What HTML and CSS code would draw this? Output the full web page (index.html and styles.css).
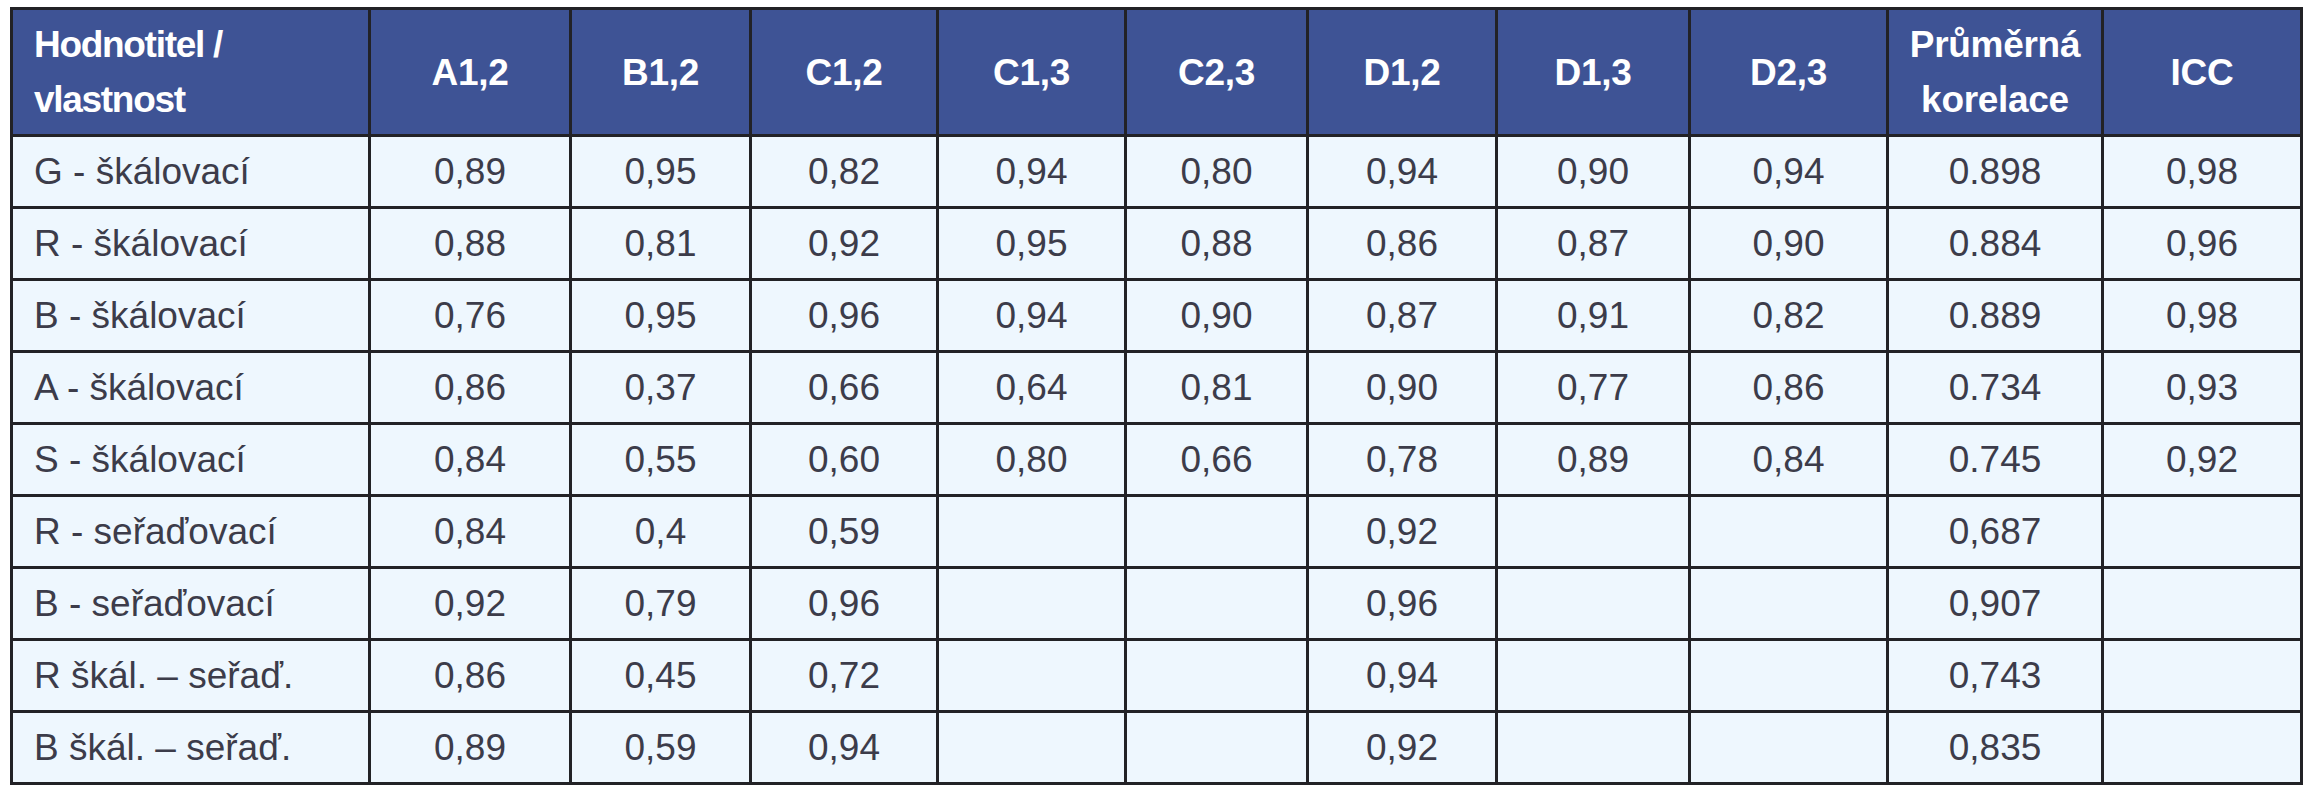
FILE: index.html
```html
<!DOCTYPE html>
<html lang="cs">
<head>
<meta charset="utf-8">
<title>Korelace hodnotitelů</title>
<link rel="stylesheet" href="styles.css">
</head>
<body>
<table class="grid">
  <colgroup>
    <col class="c-first">
    <col class="c-a12">
    <col class="c-b12">
    <col class="c-c12">
    <col class="c-c13">
    <col class="c-c23">
    <col class="c-d12">
    <col class="c-d13">
    <col class="c-d23">
    <col class="c-avg">
    <col class="c-icc">
  </colgroup>
  <thead>
    <tr>
      <th class="first">Hodnotitel /<br>vlastnost</th>
      <th>A1,2</th>
      <th>B1,2</th>
      <th>C1,2</th>
      <th>C1,3</th>
      <th>C2,3</th>
      <th>D1,2</th>
      <th>D1,3</th>
      <th>D2,3</th>
      <th>Průměrná<br>korelace</th>
      <th>ICC</th>
    </tr>
  </thead>
  <tbody>
    <tr><td class="first">G - škálovací</td><td>0,89</td><td>0,95</td><td>0,82</td><td>0,94</td><td>0,80</td><td>0,94</td><td>0,90</td><td>0,94</td><td>0.898</td><td>0,98</td></tr>
    <tr><td class="first">R - škálovací</td><td>0,88</td><td>0,81</td><td>0,92</td><td>0,95</td><td>0,88</td><td>0,86</td><td>0,87</td><td>0,90</td><td>0.884</td><td>0,96</td></tr>
    <tr><td class="first">B - škálovací</td><td>0,76</td><td>0,95</td><td>0,96</td><td>0,94</td><td>0,90</td><td>0,87</td><td>0,91</td><td>0,82</td><td>0.889</td><td>0,98</td></tr>
    <tr><td class="first">A - škálovací</td><td>0,86</td><td>0,37</td><td>0,66</td><td>0,64</td><td>0,81</td><td>0,90</td><td>0,77</td><td>0,86</td><td>0.734</td><td>0,93</td></tr>
    <tr><td class="first">S - škálovací</td><td>0,84</td><td>0,55</td><td>0,60</td><td>0,80</td><td>0,66</td><td>0,78</td><td>0,89</td><td>0,84</td><td>0.745</td><td>0,92</td></tr>
    <tr><td class="first">R - seřaďovací</td><td>0,84</td><td>0,4</td><td>0,59</td><td></td><td></td><td>0,92</td><td></td><td></td><td>0,687</td><td></td></tr>
    <tr><td class="first">B - seřaďovací</td><td>0,92</td><td>0,79</td><td>0,96</td><td></td><td></td><td>0,96</td><td></td><td></td><td>0,907</td><td></td></tr>
    <tr><td class="first">R škál. – seřaď.</td><td>0,86</td><td>0,45</td><td>0,72</td><td></td><td></td><td>0,94</td><td></td><td></td><td>0,743</td><td></td></tr>
    <tr><td class="first">B škál. – seřaď.</td><td>0,89</td><td>0,59</td><td>0,94</td><td></td><td></td><td>0,92</td><td></td><td></td><td>0,835</td><td></td></tr>
  </tbody>
</table>
</body>
</html>
```

FILE: styles.css
```css
html, body {
  margin: 0;
  padding: 0;
  background: #ffffff;
}

body {
  padding: 7px 0 0 10px;
  font-family: "Liberation Sans", Arial, sans-serif;
}

.grid {
  border-collapse: collapse;
  table-layout: fixed;
  width: 2291px;
  border: 3px solid #222226;
}

.c-first { width: 358px; }
.c-a12 { width: 201px; }
.c-b12 { width: 180px; }
.c-c12 { width: 187px; }
.c-c13 { width: 188px; }
.c-c23 { width: 182px; }
.c-d12 { width: 189px; }
.c-d13 { width: 193px; }
.c-d23 { width: 198px; }
.c-avg { width: 215px; }
.c-icc { width: 199px; }

.grid th,
.grid td {
  border: 3px solid #222226;
  text-align: center;
  vertical-align: middle;
  padding: 0;
}

.grid th {
  background: #3e5395;
  color: #ffffff;
  font-weight: bold;
  font-size: 37px;
  line-height: 55px;
  height: 124px;
  letter-spacing: -0.3px;
}

.grid th.first {
  letter-spacing: -1.3px;
}

.grid td {
  background: #eef7fe;
  color: #3c3c4a;
  font-size: 37px;
  height: 69px;
  line-height: 40px;
}

.grid .first {
  text-align: left;
  padding-left: 21px;
}
```
